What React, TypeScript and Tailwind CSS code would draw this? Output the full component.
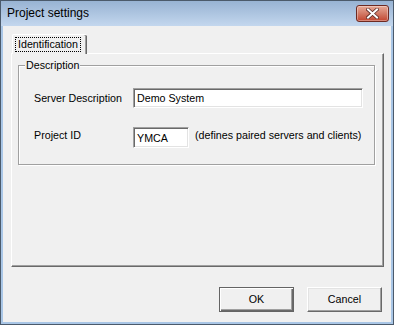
import React from "react";

const font = { fontFamily: '"Liberation Sans", Arial, sans-serif' };

const sunken =
  "bg-white border border-t-[#a0a0a0] border-l-[#a0a0a0] border-b-white border-r-white shadow-[inset_1px_1px_0_#696969,inset_-1px_-1px_0_#e3e3e3]";

const CloseButton = () => (
  <div className="w-[33px] h-[17px] rounded-[3px] border border-[#6e2a22] bg-gradient-to-b from-[#e8a996] via-[#d27a66] to-[#c2432d] shadow-[inset_0_0_0_1px_rgba(255,255,255,0.35)] flex items-center justify-center">
    <svg width="13" height="11" viewBox="0 0 13 11">
      <path
        d="M2 1.5 L11 9.5 M11 1.5 L2 9.5"
        stroke="#5a2a25"
        strokeWidth="3.6"
        strokeLinecap="square"
      />
      <path
        d="M2 1.5 L11 9.5 M11 1.5 L2 9.5"
        stroke="#ffffff"
        strokeWidth="2"
        strokeLinecap="square"
      />
    </svg>
  </div>
);

const DialogButton = ({ label, primary }: { label: string; primary?: boolean }) => (
  <button
    className={
      "w-[75px] h-[25px] text-[10.7px] text-black bg-[#f0f0f0] flex items-center justify-center " +
      (primary
        ? "border border-[#646464] shadow-[inset_1px_1px_0_#ffffff,inset_-1px_-1px_0_#696969,inset_-2px_-2px_0_#a0a0a0]"
        : "border border-t-white border-l-white border-b-[#696969] border-r-[#696969] shadow-[inset_-1px_-1px_0_#a0a0a0,inset_1px_1px_0_#e3e3e3]")
    }
  >
    {label}
  </button>
);

export default function App() {
  return (
    <div
      className="w-[394px] h-[325px] flex flex-col bg-[#a9c6e6] border border-[#4b5a6b] text-black"
      style={font}
    >
      {/* TITLE BAR */}
      <div className="h-[25px] flex items-center justify-between pl-[6px] pr-[4px] bg-gradient-to-b from-[#98b3d3] to-[#c3d7ee]">
        <span className="text-[12px] leading-none -mt-[1px]">Project settings</span>
        <CloseButton />
      </div>

      {/* CLIENT */}
      <div className="flex-1 mx-[2px] mb-[2px] bg-[#f0f0f0] flex flex-col px-[8px] pt-[8px]">
        {/* TAB HEADER */}
        <div className="flex pl-[1px] relative z-10">
          <div className="w-[75px] h-[20px] bg-[#f0f0f0] border-t border-l border-white rounded-tl-[2px] rounded-tr-[2px] shadow-[inset_-1px_0_0_#696969,inset_-2px_0_0_#a0a0a0] flex items-start pl-[3px] pt-[3px]">
            <span className="text-[10.7px] leading-[13px] px-[2px] outline outline-1 outline-dotted outline-black">
              Identification
            </span>
          </div>
        </div>

        {/* TAB PANEL */}
        <div className="-mt-[1px] w-[373px] h-[214px] border border-t-white border-l-white border-b-[#696969] border-r-[#696969] shadow-[inset_-1px_-1px_0_#a0a0a0] pl-[6px] pt-[11px]">
          {/* GROUP BOX */}
          <div className="relative w-[357px] h-[100px] border border-[#a0a0a0] shadow-[1px_1px_0_#ffffff,inset_1px_1px_0_#ffffff] pl-[15px] pt-[22px] flex flex-col gap-[19px]">
            <span className="absolute -top-[8px] left-[6px] bg-[#f0f0f0] px-[1px] text-[10.7px] leading-[14px]">
              Description
            </span>
            <div className="flex items-center h-[20px]">
              <span className="w-[99px] text-[10.7px]">Server Description</span>
              <div className={"w-[230px] h-[20px] flex items-center pl-[3px] text-[10.7px] " + sunken}>
                Demo System
              </div>
            </div>
            <div className="flex items-center h-[21px]">
              <span className="w-[99px] text-[10.7px] -mt-[4px]">Project ID</span>
              <div className={"w-[56px] h-[21px] flex items-center pl-[3px] pt-[2px] text-[10.7px] " + sunken}>
                YMCA
              </div>
              <span className="ml-[6px] text-[10.7px] -mt-[4px]">
                (defines paired servers and clients)
              </span>
            </div>
          </div>
        </div>

        {/* BUTTONS */}
        <div className="flex justify-end gap-[13px] mt-[20px] pr-[1px]">
          <DialogButton label="OK" primary />
          <DialogButton label="Cancel" />
        </div>
      </div>
    </div>
  );
}
